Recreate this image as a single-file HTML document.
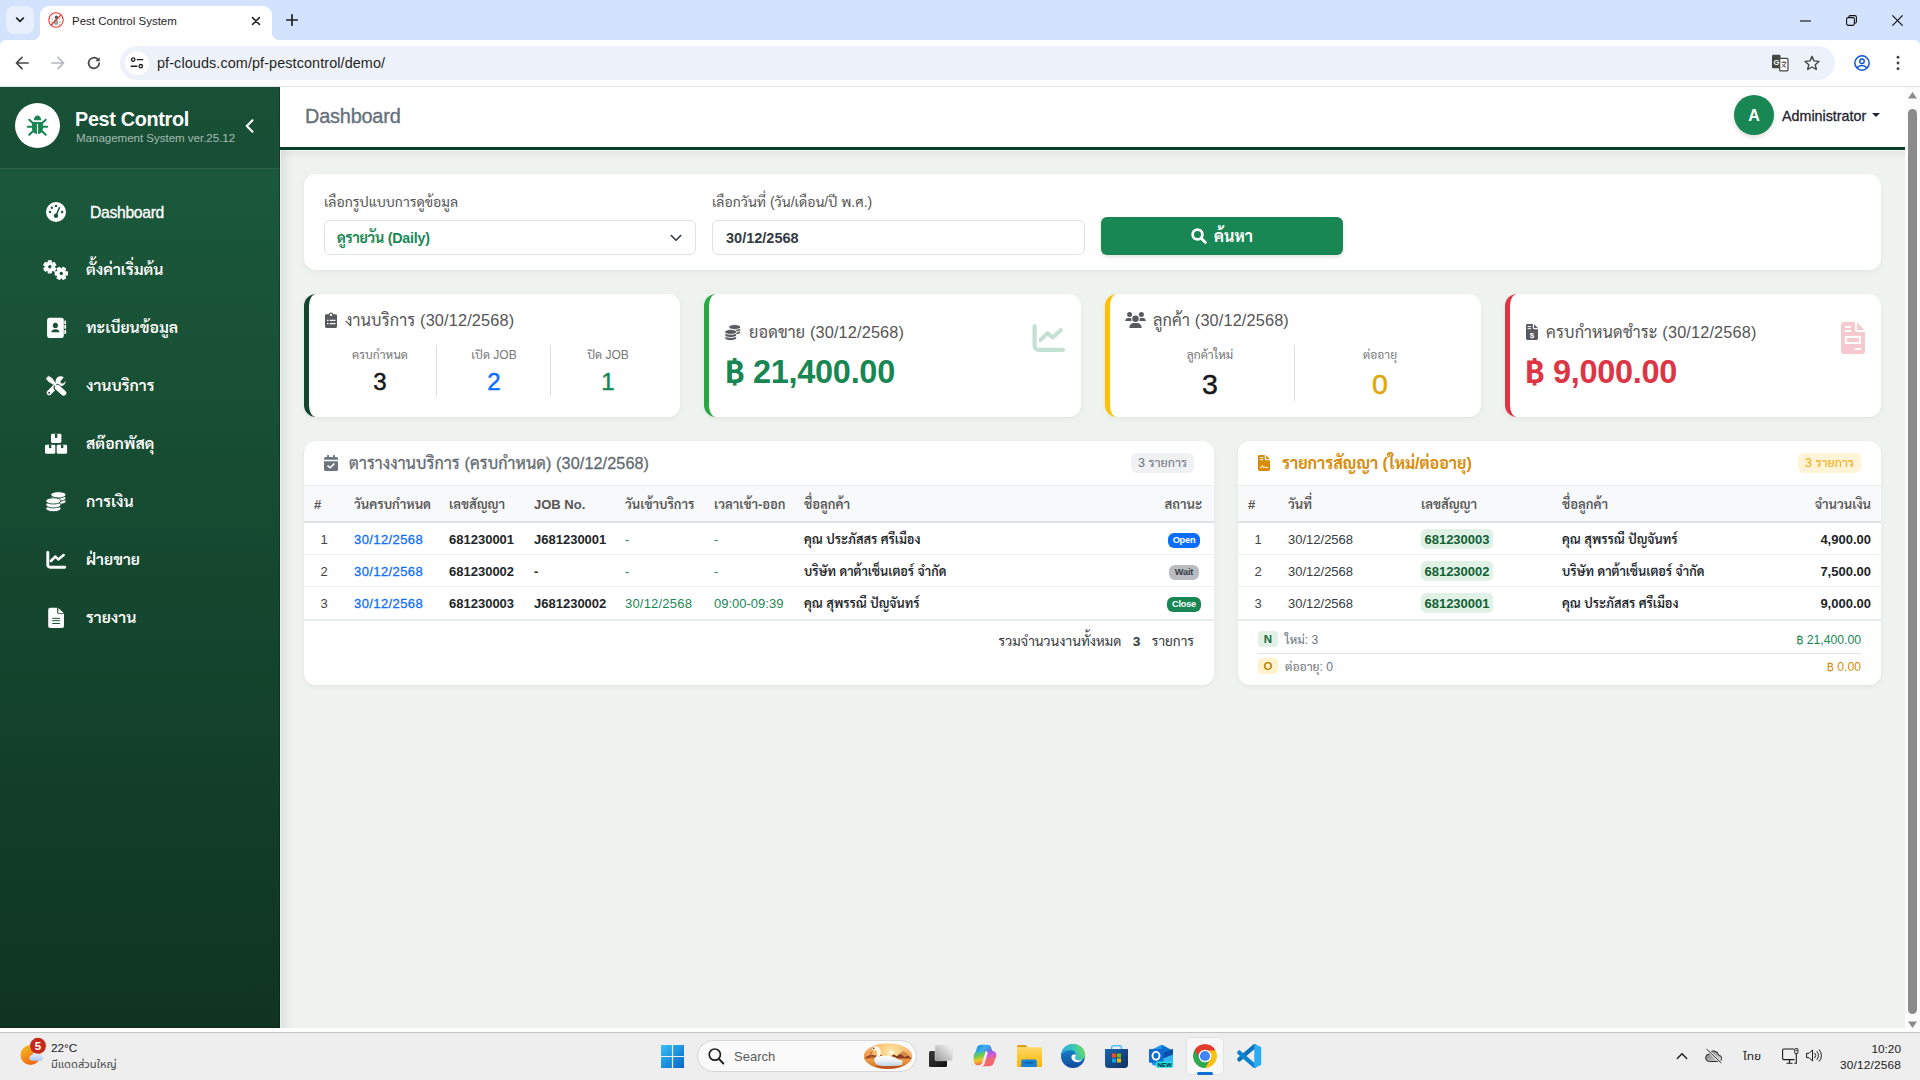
<!DOCTYPE html>
<html lang="th">
<head>
<meta charset="utf-8">
<title>Pest Control System</title>
<style>
*{box-sizing:border-box;margin:0;padding:0}
html,body{width:1920px;height:1080px;overflow:hidden;background:#fff}
body{position:relative;font-family:"Liberation Sans","Sarabun","Noto Sans Thai","Loma","Garuda","Tlwg Typo","Tahoma","Leelawadee UI",sans-serif;font-size:14px;color:#212529;-webkit-font-smoothing:antialiased}
.a{position:absolute}
.nw{white-space:nowrap}
svg{display:block;position:absolute;overflow:visible}
.ui{font-family:"Liberation Sans","Noto Sans Thai UI","Noto Sans Thai","Leelawadee UI","Sarabun","Loma","Tahoma",sans-serif}

/* ---------- browser chrome ---------- */
#tabstrip{left:0;top:0;width:1920px;height:52px;background:#d3e3fd}
#tabsearch{left:6px;top:6px;width:28px;height:28px;border-radius:8px;background:#e9f0fd}
#tab{left:40px;top:6px;width:232px;height:34px;background:#fff;border-radius:9px 9px 0 0}
#tab:before,#tab:after{content:"";position:absolute;bottom:0;width:8px;height:8px}
#tab:before{left:-8px;background:radial-gradient(circle at 0 0,transparent 8px,#fff 8.5px)}
#tab:after{right:-8px;background:radial-gradient(circle at 100% 0,transparent 8px,#fff 8.5px)}
#tabtitle{left:32px;top:7px;font-size:11.5px;line-height:16px;color:#1f1f1f;letter-spacing:0}
#toolbar{left:0;top:40px;width:1920px;height:46px;background:#fff;border-radius:6px 6px 0 0}
#tbline{left:0;top:86px;width:1920px;height:1px;background:#dfe1e5}
#omni{left:120px;top:46px;width:1715px;height:34px;border-radius:17px;background:#edf2fa}
#siteinfo{left:125px;top:51px;width:24px;height:24px;border-radius:12px;background:#fff}
#url{left:157px;top:54px;font-size:14.4px;line-height:18px;color:#1f1f1f;letter-spacing:.1px}

/* ---------- page ---------- */
#page{left:0;top:87px;width:1905px;height:941px;background:#eef3ef;overflow:hidden}
#sbar{left:1905px;top:87px;width:15px;height:941px;background:#fcfcfc}
#sidebar{left:0;top:0;width:280px;height:941px;background:linear-gradient(180deg,#1c5c3e 0%,#0f3422 100%);box-shadow:inset -1px -1px 0 rgba(0,0,0,.22)}
#sidehead{left:0;top:0;width:280px;height:82px;background:rgba(0,0,0,.115);border-bottom:1px solid rgba(255,255,255,.1)}
#sideshadow{left:280px;top:63px;width:14px;height:878px;border-left:1px solid #eff1ef;background:linear-gradient(90deg,rgba(0,0,0,.068),rgba(0,0,0,.028) 45%,rgba(0,0,0,0))}
#topshadow{left:280px;top:63px;width:1625px;height:9px;border-top:1px solid #f3f5f3;background:linear-gradient(180deg,rgba(0,0,0,.04),rgba(0,0,0,0))}
#logo{left:15px;top:16px;width:45px;height:45px;border-radius:50%;background:#fff}
#brand{left:75px;top:19px;font-size:19.8px;line-height:26px;font-weight:700;color:#fff;letter-spacing:-0.3px}
#brandsub{left:76px;top:43px;font-size:11.6px;line-height:16px;color:rgba(255,255,255,.62);letter-spacing:-0.05px}
.mi{left:86px;font-size:15.75px;line-height:28px;font-weight:600;color:#fff}
#topbar{left:280px;top:0;width:1625px;height:63px;background:#fff;border-bottom:3px solid #0a3f29}
#ptitle{left:25px;top:15px;font-size:19.9px;line-height:28px;color:#66707c;font-weight:400;letter-spacing:-0.2px;-webkit-text-stroke:.35px #66707c}
#avatar{left:1454px;top:8px;width:40px;height:40px;border-radius:50%;background:#198754;color:#fff;font-weight:700;font-size:16px;line-height:42px;text-align:center;box-shadow:0 2px 5px rgba(0,0,0,.15)}
#admin{left:1502px;top:19px;font-size:14.3px;line-height:20px;color:#1f2430;-webkit-text-stroke:.3px #1f2430}

/* ---------- content ---------- */
.card{background:#fff;border-radius:12px;box-shadow:0 2px 5px rgba(0,0,0,.05)}
.lbl{font-size:14px;line-height:20px;color:#555;}
.inp{height:35px;border:1px solid #dee2e6;border-radius:6px;background:#fff}
.inp div{position:absolute;top:7px;left:12px;font-size:14.3px;line-height:20px;font-weight:700;white-space:nowrap}
#btn{left:1101px;top:130px;width:242px;height:38px;border-radius:6px;background:#198754;box-shadow:0 2px 4px rgba(0,0,0,.12)}
#btn div{position:absolute;left:113px;top:9px;font-size:16px;line-height:22px;font-weight:700;color:#fff;white-space:nowrap}
.stat{top:207px;height:123px;width:377px;border-left:5px solid #000}
.st{font-size:16.3px;letter-spacing:.15px;line-height:22px;color:#555;white-space:nowrap}
.sl{font-size:12px;line-height:18px;color:#777;text-align:center;width:114px;white-space:nowrap}
.sn{font-size:24px;line-height:30px;font-weight:400;text-align:center;width:114px;color:#16181b;-webkit-text-stroke:.5px currentColor}
.sep{width:1px;background:#dcdfe2}
.amt{font-size:32.5px;line-height:40px;font-weight:700;white-space:nowrap;letter-spacing:-.3px}

/* ---------- tables ---------- */
.ch{font-size:16.2px;letter-spacing:.1px;line-height:22px;white-space:nowrap}
.cb{height:20px;border-radius:6px;font-size:12.5px;line-height:20px;text-align:center;white-space:nowrap}
.thead{left:0;top:44px;height:38px;background:#f8f9fa;border-top:1px solid #eceef0;border-bottom:2px solid #dee2e6}
.th{top:54px;font-size:13px;line-height:20px;font-weight:600;color:#555;white-space:nowrap}
.td{font-size:13px;line-height:20px;white-space:nowrap;color:#212529}
.rl{left:0;height:1px;background:#edeff1}
.b{font-weight:600}
.bd{height:15px;border-radius:6px;font-size:9.2px;line-height:15px;font-weight:700;text-align:center;color:#fff;letter-spacing:-.2px}
.cn{left:183px;width:72px;height:20px;border-radius:5px;background:#e1f1e6;color:#0f6137;font-weight:700;font-size:13px;line-height:21.500px;text-align:center}
.sm{font-size:12.2px;line-height:18px;white-space:nowrap}
.sb{left:20px;width:20px;height:16px;border-radius:4px;font-size:11.5px;line-height:16px;font-weight:700;text-align:center}

/* ---------- taskbar ---------- */
#tb{left:0;top:1033px;width:1920px;height:47px;background:#eeeeee}
#tbtop{left:0;top:1032px;width:1920px;height:1px;background:#c4c4c4}
.tt{font-size:12px;line-height:16px;color:#1b1b1b;white-space:nowrap}
#srch{left:697px;top:1040px;width:220px;height:32px;border-radius:16px;background:#fafafa;border:1px solid #d6d6d6}
#chromebg{left:1186px;top:1037px;width:38px;height:38px;border-radius:5px;background:#f8f8f8;border:1px solid #e3e3e3}
</style>
</head>
<body>
<!-- ================= BROWSER CHROME ================= -->
<div class="a" id="tabstrip"></div>
<div class="a" id="tabsearch"><svg style="left:8px;top:9px" width="12" height="10" viewBox="0 0 12 10"><path d="M2.700 3.100 6 6.400 9.300 3.100" fill="none" stroke="#1f1f1f" stroke-width="1.700" stroke-linecap="round" stroke-linejoin="round"/></svg></div>
<div class="a" id="tab">
  <svg style="left:8px;top:6px" width="16" height="16" viewBox="0 0 16 16"><circle cx="8" cy="8" r="7.2" fill="#fff" stroke="#e53935" stroke-width="1.1"/><ellipse cx="8.4" cy="5.2" rx="1.6" ry="1.7" fill="#555"/><ellipse cx="8" cy="10" rx="2.2" ry="3" fill="#9e9e9e"/><path d="M5 7.5l-1.5-1M5 10H3.2M5.4 12l-1.4 1.2M11 7.5l1.5-1M11 10h1.8M10.6 12l1.4 1.2" stroke="#777" stroke-width=".7"/><path d="M3 13 13 3" stroke="#e53935" stroke-width="1.1"/></svg>
  <div class="a nw ui" id="tabtitle">Pest Control System</div>
  <svg style="left:212px;top:11px" width="8" height="8" viewBox="0 0 8 8"><path d="M.6.6l6.8 6.8M7.4.6.6 7.4" stroke="#1f1f1f" stroke-width="1.5" stroke-linecap="round"/></svg>
</div>
<svg class="a" style="left:286px;top:14px" width="12" height="12" viewBox="0 0 12 12"><path d="M6 .8v10.4M.8 6h10.4" stroke="#1f1f1f" stroke-width="1.7" stroke-linecap="round"/></svg>
<!-- window controls -->
<svg class="a" style="left:1800px;top:20px" width="11" height="2" viewBox="0 0 11 2"><path d="M0 1h11" stroke="#111" stroke-width="1.1"/></svg>
<svg class="a" style="left:1846px;top:15px" width="11" height="11" viewBox="0 0 11 11"><rect x=".6" y="2.6" width="7.8" height="7.8" rx="1.6" fill="none" stroke="#111" stroke-width="1.1"/><path d="M2.8 2.4V2A1.5 1.5 0 0 1 4.3.6h4.6A1.5 1.5 0 0 1 10.4 2v4.7a1.5 1.5 0 0 1-1.5 1.5h-.3" fill="none" stroke="#111" stroke-width="1.1"/></svg>
<svg class="a" style="left:1892px;top:15px" width="11" height="11" viewBox="0 0 11 11"><path d="M.4.4l10.2 10.2M10.6.4.4 10.6" stroke="#111" stroke-width="1.2"/></svg>

<div class="a" id="toolbar"></div>
<div class="a" id="tbline"></div>
<!-- nav buttons -->
<svg class="a" style="left:15px;top:56px" width="14" height="14" viewBox="0 0 14 14"><path d="M13 7H1.6M7 1.4 1.4 7 7 12.6" fill="none" stroke="#444746" stroke-width="1.7" stroke-linecap="round" stroke-linejoin="round"/></svg>
<svg class="a" style="left:51px;top:56px" width="14" height="14" viewBox="0 0 14 14"><path d="M1 7h11.4M7 1.4 12.6 7 7 12.6" fill="none" stroke="#b4b7bb" stroke-width="1.7" stroke-linecap="round" stroke-linejoin="round"/></svg>
<svg class="a" style="left:87px;top:56px" width="14" height="14" viewBox="0 0 14 14"><path d="M12.2 7A5.3 5.3 0 1 1 10.6 3.2" fill="none" stroke="#444746" stroke-width="1.7" stroke-linecap="round"/><path d="M12.6 1v4.2H8.4z" fill="#444746"/></svg>
<div class="a" id="omni"></div>
<div class="a" id="siteinfo"><svg style="left:5px;top:6px" width="14" height="12" viewBox="0 0 14 12"><circle cx="3.2" cy="2.6" r="1.7" fill="none" stroke="#1f1f1f" stroke-width="1.3"/><path d="M7.2 2.6h5.6" stroke="#1f1f1f" stroke-width="1.4" stroke-linecap="round"/><circle cx="10.8" cy="9.2" r="1.7" fill="none" stroke="#1f1f1f" stroke-width="1.3"/><path d="M1.2 9.2h5.6" stroke="#1f1f1f" stroke-width="1.4" stroke-linecap="round"/></svg></div>
<div class="a nw ui" id="url">pf-clouds.com/pf-pestcontrol/demo/</div>
<!-- translate -->
<svg class="a" style="left:1771px;top:55px" width="18" height="17" viewBox="0 0 18 17"><path d="M2.200-.2H8.400a1.200 1.200 0 0 1 1.200 1.200V13.200H2.200A1.200 1.200 0 0 1 1 12V1A1.200 1.200 0 0 1 2.200-.2z" fill="#444746"/><rect x="8.700" y="3.300" width="8.300" height="12.600" rx="1" fill="#fdfdfe" stroke="#444746" stroke-width="1.200"/><text x="2.400" y="9.600" font-family="Liberation Sans,sans-serif" font-size="7.500" font-weight="700" fill="#fff">G</text><path d="M10.400 7.300h5M12.900 6.200v1.100M14.600 7.300c-.4 2.200-1.700 4-3.800 5M11.500 9c.7 1.500 1.900 2.700 3.700 3.400" fill="none" stroke="#444746" stroke-width=".9"/></svg>
<!-- star -->
<svg class="a" style="left:1804px;top:55px" width="16" height="16" viewBox="0 0 16 16"><path d="M8 1.4l2 4.5 4.9.5-3.7 3.3 1.1 4.8L8 12l-4.3 2.5 1.1-4.8L1.1 6.4 6 5.9z" fill="none" stroke="#444746" stroke-width="1.4" stroke-linejoin="round"/></svg>
<!-- profile -->
<svg class="a" style="left:1854px;top:55px" width="16" height="16" viewBox="0 0 16 16"><circle cx="8" cy="8" r="7.150" fill="none" stroke="#0b57d0" stroke-width="1.500"/><circle cx="8" cy="6.200" r="2.250" fill="none" stroke="#0b57d0" stroke-width="1.400"/><path d="M3.100 13c1.100-1.700 2.800-2.500 4.900-2.500s3.800.8 4.900 2.500" fill="none" stroke="#0b57d0" stroke-width="1.400"/></svg>
<!-- menu dots -->
<svg class="a" style="left:1896px;top:55px" width="4" height="16" viewBox="0 0 4 16"><circle cx="2" cy="2.300" r="1.450" fill="#444746"/><circle cx="2" cy="8" r="1.450" fill="#444746"/><circle cx="2" cy="13.700" r="1.450" fill="#444746"/></svg>

<!-- ================= PAGE ================= -->
<div class="a" id="page">
  <!-- filter card -->
  <div class="a card" style="left:304px;top:87px;width:1577px;height:96px">
    <div class="a nw lbl" style="left:20px;top:18px">เลือกรูปแบบการดูข้อมูล</div>
    <div class="a inp" style="left:20px;top:46px;width:372px"><div style="color:#198754;letter-spacing:-.25px">ดูรายวัน (Daily)</div>
      <svg style="left:345px;top:13px" width="12" height="8" viewBox="0 0 12 8"><path d="M1.300 1.500 6 6.200l4.700-4.700" fill="none" stroke="#343a40" stroke-width="1.600" stroke-linecap="round" stroke-linejoin="round"/></svg></div>
    <div class="a nw lbl" style="left:408px;top:18px">เลือกวันที่ (วัน/เดือน/ปี พ.ศ.)</div>
    <div class="a inp" style="left:408px;top:46px;width:373px"><div style="color:#343a40;left:13px;font-size:14.500px">30/12/2568</div></div>
  </div>
  <div class="a" id="btn"><svg style="left:90px;top:11px" width="16" height="16" viewBox="0 0 16 16"><circle cx="6.500" cy="6.500" r="4.900" fill="none" stroke="#fff" stroke-width="2.700"/><path d="M10.400 10.400 14.500 14.500" stroke="#fff" stroke-width="2.800" stroke-linecap="round"/></svg><div>ค้นหา</div></div>

  <!-- stat 1 -->
  <div class="a card stat" style="left:304px;width:376px;border-left-color:#14452f">
    <svg style="left:16px;top:18px" width="12" height="16" viewBox="0 0 12 16"><path d="M1.400 2.200h2.200a2.500 2.500 0 0 1 4.800 0h2.200A1.400 1.400 0 0 1 12 3.600v11a1.400 1.400 0 0 1-1.400 1.400H1.400A1.400 1.400 0 0 1 0 14.600v-11A1.400 1.400 0 0 1 1.400 2.200z" fill="#575b5f"/><circle cx="6" cy="2.900" r="1.150" fill="#fff"/><path d="M2 8.400h1.500M4.800 8.400h5.600M2 11.600h1.500M4.800 11.600h5.600" stroke="#fff" stroke-width="1.200"/></svg>
    <div class="a st" style="left:36px;top:15px">งานบริการ (30/12/2568)</div>
    <div class="a sl" style="left:14px;top:52px">ครบกำหนด</div><div class="a sn" style="left:14px;top:73px">3</div>
    <div class="a sep" style="left:127px;top:51px;height:51px"></div>
    <div class="a sl" style="left:128px;top:52px">เปิด JOB</div><div class="a sn" style="left:128px;top:73px;color:#0d6efd">2</div>
    <div class="a sep" style="left:241px;top:51px;height:51px"></div>
    <div class="a sl" style="left:242px;top:52px">ปิด JOB</div><div class="a sn" style="left:242px;top:73px;color:#198754">1</div>
  </div>
  <!-- stat 2 -->
  <div class="a card stat" style="left:704px;border-left-color:#28a745">
    <svg style="left:15.400px;top:29.700px" width="17.600" height="17.600" viewBox="0 0 22 22"><g fill="#575b5f" stroke="#fff" stroke-width="1.100"><ellipse cx="13.400" cy="10.400" rx="7.600" ry="3.100"/><ellipse cx="13.400" cy="7.100" rx="7.600" ry="3.100"/><ellipse cx="13.400" cy="3.800" rx="7.600" ry="3.100"/><ellipse cx="8.400" cy="17.600" rx="7.600" ry="3.100"/><ellipse cx="8.400" cy="13.800" rx="7.600" ry="3.100"/><ellipse cx="8.400" cy="9.900" rx="7.600" ry="3.100"/></g></svg>
    <div class="a st" style="left:40px;top:27px">ยอดขาย (30/12/2568)</div>
    <div class="a amt" style="left:16px;top:57.500px;color:#198754">฿ 21,400.00</div>
    <svg style="left:323px;top:30px" width="33" height="28" viewBox="0 0 33 28"><path d="M2.600 2.200v19.700a4 4 0 0 0 4 4H31" fill="none" stroke="#c3e0d3" stroke-width="4.200" stroke-linecap="round"/><path d="M8.500 16 15.500 9.100 20.700 13.500 29 6" fill="none" stroke="#c3e0d3" stroke-width="4" stroke-linecap="round" stroke-linejoin="round"/></svg>
  </div>
  <!-- stat 3 -->
  <div class="a card stat" style="left:1105px;width:376px;border-left-color:#ffc107">
    <svg style="left:15px;top:18px" width="21" height="16" viewBox="0 0 21 16"><g fill="#575b5f"><circle cx="10.500" cy="6.800" r="3.250"/><path d="M4.200 16c.3-3 2.300-4.900 4.300-4.900h4c2 0 4 1.900 4.300 4.900z"/><circle cx="4.600" cy="2.500" r="2.500"/><circle cx="16.400" cy="2.500" r="2.500"/><path d="M.1 9c.2-1.700 1.400-2.900 2.900-2.900h2.300c.4 0 .8.100 1.100.3-.3 1-.1 1.900.3 2.600zM20.900 9c-.2-1.700-1.400-2.900-2.900-2.900h-2.300c-.4 0-.8.100-1.100.3.300 1 .1 1.900-.3 2.600z"/></g></svg>
    <div class="a st" style="left:43px;top:15px">ลูกค้า (30/12/2568)</div>
    <div class="a sl" style="left:15px;top:52px;width:170px">ลูกค้าใหม่</div><div class="a sn" style="left:15px;top:73px;width:170px;font-size:28.500px;line-height:34px">3</div>
    <div class="a sep" style="left:184px;top:51px;height:56px"></div>
    <div class="a sl" style="left:185px;top:52px;width:170px">ต่ออายุ</div><div class="a sn" style="left:185px;top:73px;width:170px;font-size:28.500px;line-height:34px;color:#e0a800">0</div>
  </div>
  <!-- stat 4 -->
  <div class="a card stat" style="left:1505px;width:376px;border-left-color:#dc3545">
    <svg style="left:16px;top:30px" width="12" height="16" viewBox="0 0 12 16"><path d="M1.400 0H6.800v3.800A1.400 1.400 0 0 0 8.200 5.200H12v9.400a1.400 1.400 0 0 1-1.400 1.400H1.400A1.400 1.400 0 0 1 0 14.600V1.400A1.400 1.400 0 0 1 1.400 0z" fill="#565a5e"/><path d="M8 .2 11.800 4H8z" fill="#565a5e"/><path d="M1.600 2.600h3.600M1.600 4.700h3.600" stroke="#fff" stroke-width="1"/><text x="3.700" y="13.500" font-family="Liberation Sans,sans-serif" font-size="8" font-weight="700" fill="#fff">$</text></svg>
    <div class="a st" style="left:36px;top:27px">ครบกำหนดชำระ (30/12/2568)</div>
    <div class="a amt" style="left:15px;top:57.500px;color:#dc3545">฿ 9,000.00</div>
    <svg style="left:331px;top:28px" width="24" height="32" viewBox="0 0 24 32"><path d="M3 0H14V8a2 2 0 0 0 2 2h8V29a3 3 0 0 1-3 3H3a3 3 0 0 1-3-3V3A3 3 0 0 1 3 0z" fill="#f5c9ce"/><path d="M16 .6 23.400 8H16z" fill="#f5c9ce"/><path d="M3.800 5H10M3.800 9H10M13.900 27.100h6" stroke="#fff" stroke-width="2"/><rect x="4.800" y="14.900" width="14.100" height="6.100" fill="none" stroke="#fff" stroke-width="2"/></svg>
  </div>
  <!-- service table -->
  <div class="a card" style="left:304px;top:354px;width:910px;height:244px">
    <svg style="left:20px;top:14px" width="14" height="16" viewBox="0 0 14 16"><path d="M0 6.200h14v8.300a1.500 1.500 0 0 1-1.500 1.500h-11A1.500 1.500 0 0 1 0 14.500z" fill="#6c757d"/><path d="M1.500 2h11A1.500 1.500 0 0 1 14 3.500v1.200H0V3.500A1.500 1.500 0 0 1 1.500 2z" fill="#6c757d"/><rect x="3.100" y="0" width="1.900" height="3.500" rx=".5" fill="#6c757d"/><rect x="9" y="0" width="1.900" height="3.500" rx=".5" fill="#6c757d"/><path d="M3.500 10.600 6.200 12.700 10.400 8.500" fill="none" stroke="#fff" stroke-width="1.600"/></svg>
    <div class="a ch" style="left:45px;top:11px;color:#646b72;-webkit-text-stroke:.3px #646b72">ตารางงานบริการ (ครบกำหนด) (30/12/2568)</div>
    <div class="a cb" style="left:827px;top:12px;width:63px;background:#eff1f3;color:#6c757d">3 รายการ</div>
    <div class="a thead" style="width:910px"></div>
    <div class="a th" style="left:10px">#</div>
    <div class="a th" style="left:50px">วันครบกำหนด</div>
    <div class="a th" style="left:145px">เลขสัญญา</div>
    <div class="a th" style="left:230px">JOB No.</div>
    <div class="a th" style="left:321px">วันเข้าบริการ</div>
    <div class="a th" style="left:410px">เวลาเข้า-ออก</div>
    <div class="a th" style="left:500px">ชื่อลูกค้า</div>
    <div class="a th" style="right:12px">สถานะ</div>
    <div class="a td" style="left:0;width:40px;text-align:center;top:89px;color:#444">1</div>
    <div class="a td" style="left:50px;top:89px;color:#0d6efd;letter-spacing:.4px;-webkit-text-stroke:.3px #0d6efd">30/12/2568</div>
    <div class="a td b" style="left:145px;top:89px">681230001</div>
    <div class="a td b" style="left:230px;top:89px">J681230001</div>
    <div class="a td" style="left:321px;top:89px;color:#198754">-</div>
    <div class="a td" style="left:410px;top:89px;color:#198754">-</div>
    <div class="a td b" style="left:500px;top:89px;font-size:12.700px">คุณ ประภัสสร ศรีเมือง</div>
    <div class="a bd" style="left:864px;top:92px;width:32px;background:#0d6efd;color:#fff">Open</div>
    <div class="a rl" style="top:113px;width:910px"></div>
    <div class="a td" style="left:0;width:40px;text-align:center;top:121px;color:#444">2</div>
    <div class="a td" style="left:50px;top:121px;color:#0d6efd;letter-spacing:.4px;-webkit-text-stroke:.3px #0d6efd">30/12/2568</div>
    <div class="a td b" style="left:145px;top:121px">681230002</div>
    <div class="a td b" style="left:230px;top:121px">-</div>
    <div class="a td" style="left:321px;top:121px;color:#198754">-</div>
    <div class="a td" style="left:410px;top:121px;color:#198754">-</div>
    <div class="a td b" style="left:500px;top:121px;font-size:12.700px">บริษัท ดาต้าเซ็นเตอร์ จำกัด</div>
    <div class="a bd" style="left:865px;top:124px;width:30px;background:#b9bdc1;color:#343a40">Wait</div>
    <div class="a rl" style="top:145px;width:910px"></div>
    <div class="a td" style="left:0;width:40px;text-align:center;top:153px;color:#444">3</div>
    <div class="a td" style="left:50px;top:153px;color:#0d6efd;letter-spacing:.4px;-webkit-text-stroke:.3px #0d6efd">30/12/2568</div>
    <div class="a td b" style="left:145px;top:153px">681230003</div>
    <div class="a td b" style="left:230px;top:153px">J681230002</div>
    <div class="a td" style="left:321px;top:153px;color:#198754;letter-spacing:.2px">30/12/2568</div>
    <div class="a td" style="left:410px;top:153px;color:#198754">09:00-09:39</div>
    <div class="a td b" style="left:500px;top:153px;font-size:12.700px">คุณ สุพรรณี ปัญจันทร์</div>
    <div class="a bd" style="left:863px;top:156px;width:34px;background:#198754;color:#fff">Close</div>
    <div class="a rl" style="top:178px;width:910px;height:2px;background:#e9ecef"></div>
    <div class="a td" style="right:20px;top:191px;font-size:13.7px;color:#343a40">รวมจำนวนงานทั้งหมด &nbsp; <b>3</b> &nbsp; รายการ</div>
  </div>
  <!-- contract table -->
  <div class="a card" style="left:1238px;top:354px;width:643px;height:244px">
    <svg style="left:20px;top:14px" width="12" height="16" viewBox="0 0 12 16"><path d="M1.400 0H6.800v3.800A1.400 1.400 0 0 0 8.200 5.200H12v9.400a1.400 1.400 0 0 1-1.400 1.400H1.400A1.400 1.400 0 0 1 0 14.600V1.400A1.400 1.400 0 0 1 1.400 0z" fill="#d88c08"/><path d="M8 .2 11.800 4H8z" fill="#d88c08"/><path d="M1.900 2.600h3.300M1.900 4.700h3.300" stroke="#fff" stroke-width="1"/><path d="M2 12.500h1.500l1-2.300 1.200 2.600.9-1.200.8.900h2.700" fill="none" stroke="#fff" stroke-width=".9" stroke-linejoin="round"/></svg>
    <div class="a ch" style="left:44px;top:12px;color:#d88c08;font-weight:700;font-size:16px;letter-spacing:0">รายการสัญญา (ใหม่/ต่ออายุ)</div>
    <div class="a cb" style="left:560px;top:12px;width:63px;background:#fff5d6;color:#f3a60b">3 รายการ</div>
    <div class="a thead" style="width:643px"></div>
    <div class="a th" style="left:10px">#</div>
    <div class="a th" style="left:50px">วันที่</div>
    <div class="a th" style="left:183px">เลขสัญญา</div>
    <div class="a th" style="left:324px">ชื่อลูกค้า</div>
    <div class="a th" style="right:10px">จำนวนเงิน</div>
    <div class="a td" style="left:0;width:40px;text-align:center;top:89px;color:#444">1</div>
    <div class="a td" style="left:50px;top:89px;color:#343a40">30/12/2568</div>
    <div class="a cn" style="top:88px">681230003</div>
    <div class="a td b" style="left:324px;top:89px;font-size:12.700px">คุณ สุพรรณี ปัญจันทร์</div>
    <div class="a td b" style="right:10px;top:89px">4,900.00</div>
    <div class="a rl" style="top:113px;width:643px"></div>
    <div class="a td" style="left:0;width:40px;text-align:center;top:121px;color:#444">2</div>
    <div class="a td" style="left:50px;top:121px;color:#343a40">30/12/2568</div>
    <div class="a cn" style="top:120px">681230002</div>
    <div class="a td b" style="left:324px;top:121px;font-size:12.700px">บริษัท ดาต้าเซ็นเตอร์ จำกัด</div>
    <div class="a td b" style="right:10px;top:121px">7,500.00</div>
    <div class="a rl" style="top:145px;width:643px"></div>
    <div class="a td" style="left:0;width:40px;text-align:center;top:153px;color:#444">3</div>
    <div class="a td" style="left:50px;top:153px;color:#343a40">30/12/2568</div>
    <div class="a cn" style="top:152px">681230001</div>
    <div class="a td b" style="left:324px;top:153px;font-size:12.700px">คุณ ประภัสสร ศรีเมือง</div>
    <div class="a td b" style="right:10px;top:153px">9,000.00</div>
    <div class="a rl" style="top:178px;width:643px;height:2px;background:#e9ecef"></div>
    <div class="a sb" style="top:190px;background:#e1f1e6;color:#146c43">N</div>
    <div class="a sm" style="left:47px;top:190px;color:#6c757d">ใหม่: 3</div>
    <div class="a sm" style="right:20px;top:190px;color:#198754">฿ 21,400.00</div>
    <div class="a rl" style="left:20px;top:212px;width:603px;background:#dee2e6"></div>
    <div class="a sb" style="top:217px;background:#fff3cd;color:#b8860b">O</div>
    <div class="a sm" style="left:47px;top:217px;color:#6c757d">ต่ออายุ: 0</div>
    <div class="a sm" style="right:20px;top:217px;color:#d88c08">฿ 0.00</div>
  </div>
  <div class="a" id="topbar">
    <div class="a nw" id="ptitle">Dashboard</div>
    <div class="a" id="avatar">A</div>
    <div class="a nw" id="admin">Administrator</div>
    <svg style="left:1592px;top:26px" width="8" height="4" viewBox="0 0 8 4"><path d="M0 0h8L4 4z" fill="#1f2430"/></svg>
  </div>
  <div class="a" id="topshadow"></div>
  <div class="a" id="sideshadow"></div>
  <div class="a" id="sidebar">
    <div class="a" id="sidehead">
      <div class="a" id="logo"><svg style="left:12px;top:12px" width="21" height="21" viewBox="0 0 21 21"><path d="M6.750 5.300a3.750 4.700 0 0 1 7.500 0z" fill="#198754"/><path d="M5 7H16v6.500a5.500 5.500 0 0 1-11 0z" fill="#198754"/><path d="M2.250 4.750 5.500 7.800M.8 11.750H5M2.250 19.750 6 16.200M18.750 4.750 15.500 7.800M20.200 11.750H16M18.750 19.750 15 16.200" stroke="#198754" stroke-width="2.100" stroke-linecap="round"/><rect x="9.950" y="8.900" width="1.100" height="10.500" fill="#fff"/></svg></div>
      <div class="a nw" id="brand">Pest Control</div>
      <div class="a nw" id="brandsub">Management System ver.25.12</div>
      <svg style="left:245px;top:32px" width="9" height="14" viewBox="0 0 9 14"><path d="M7.500 1.300 1.800 7l5.700 5.700" fill="none" stroke="#fff" stroke-width="2.200" stroke-linecap="round" stroke-linejoin="round"/></svg>
    </div>
    <!-- SIDEBAR-MENU -->
    <!-- dashboard -->
    <svg style="left:46px;top:115px" width="20" height="20" viewBox="0 0 20 20"><circle cx="10" cy="10" r="10" fill="#fff"/><circle cx="10" cy="3.900" r="1.200" fill="#1b563a"/><circle cx="5.800" cy="5.800" r="1.200" fill="#1b563a"/><circle cx="4" cy="10" r="1.200" fill="#1b563a"/><circle cx="16.100" cy="10" r="1.200" fill="#1b563a"/><path d="M10 13.600 13.400 5.700" stroke="#1b563a" stroke-width="1.500" stroke-linecap="round"/><circle cx="10" cy="13.700" r="2.250" fill="#1b563a"/></svg>
    <div class="a nw mi" style="left:90px;top:112px;font-weight:400;font-size:15.700px;letter-spacing:-.3px;-webkit-text-stroke:.3px #fff">Dashboard</div>
    <!-- cogs -->
    <svg style="left:43px;top:173px" width="26" height="21" viewBox="0 0 26 21"><path d="M8.50 10.97 L8.30 12.92 L5.30 12.92 L5.10 10.97 L4.04 10.36 L2.25 11.16 L0.75 8.56 L2.34 7.41 L2.34 6.19 L0.75 5.04 L2.25 2.44 L4.04 3.24 L5.10 2.63 L5.30 0.68 L8.30 0.68 L8.50 2.63 L9.56 3.24 L11.35 2.44 L12.85 5.04 L11.26 6.19 L11.26 7.41 L12.85 8.56 L11.35 11.16 L9.56 10.36Z" fill="#fff" stroke="#fff" stroke-width="1.100" stroke-linejoin="round"/><circle cx="6.800" cy="6.800" r="1.700" fill="#1b563a"/><path d="M22.47 11.70 L24.42 11.90 L24.42 14.90 L22.47 15.10 L21.86 16.16 L22.66 17.95 L20.06 19.45 L18.91 17.86 L17.69 17.86 L16.54 19.45 L13.94 17.95 L14.74 16.16 L14.13 15.10 L12.18 14.90 L12.18 11.90 L14.13 11.70 L14.74 10.64 L13.94 8.85 L16.54 7.35 L17.69 8.94 L18.91 8.94 L20.06 7.35 L22.66 8.85 L21.86 10.64Z" fill="#fff" stroke="#fff" stroke-width="1.100" stroke-linejoin="round"/><circle cx="18.300" cy="13.400" r="1.700" fill="#1a5338"/></svg>
    <div class="a nw mi" style="top:169px">ตั้งค่าเริ่มต้น</div>
    <!-- address book -->
    <svg style="left:47px;top:230px" width="20" height="22" viewBox="0 0 20 22"><rect x=".1" y=".8" width="16.700" height="20.200" rx="2.300" fill="#fff"/><circle cx="8.400" cy="8.400" r="2.550" fill="#1a5137"/><path d="M4.200 15.300c.3-2 1.900-3 4.200-3s3.900 1 4.200 3z" fill="#1a5137"/><rect x="17.300" y="3.400" width="1.800" height="3.800" rx=".5" fill="#fff"/><rect x="17.300" y="7.900" width="1.800" height="3.800" rx=".5" fill="#fff"/><rect x="17.300" y="13" width="1.800" height="4" rx=".5" fill="#fff"/></svg>
    <div class="a nw mi" style="top:227px">ทะเบียนข้อมูล</div>
    <!-- tools -->
    <svg style="left:46px;top:289px" width="21" height="20" viewBox="0 0 21 20"><path d="M12.800 7 3.100 16.700" stroke="#fff" stroke-width="5" stroke-linecap="round"/><circle cx="14.600" cy="5.200" r="5" fill="#fff"/><path d="M14.300 5.500 17.700 1.200 20.500 4 17.800 7.300 15.200 7.600z" fill="#1a4f36"/><path d="M16.500 0h4v3z" fill="#1a4f36"/><circle cx="3.100" cy="16.800" r="1" fill="#1a4f36"/><path d="M.2 2.400 2.500.2 6 2.300 8.900 6.600 7.200 8.300 2.600 5.600z" fill="#fff" stroke="#fff" stroke-width=".6" stroke-linejoin="round"/><path d="M11.200 11.500 17.500 17" stroke="#1a4f36" stroke-width="7" stroke-linecap="round"/><path d="M7.600 7.200 11.500 11" stroke="#fff" stroke-width="1.800"/><path d="M11.600 11.600 17.600 17" stroke="#fff" stroke-width="5.400" stroke-linecap="round"/></svg>
    <div class="a nw mi" style="top:285px">งานบริการ</div>
    <!-- boxes -->
    <svg style="left:45px;top:347px" width="23" height="20" viewBox="0 0 23 20"><rect x="6" y="-.2" width="10.400" height="9.200" rx="1.400" fill="#fff"/><rect x="9.900" y="-.2" width="2.400" height="4.100" fill="#1a4d35"/><rect x="0" y="10.700" width="10.300" height="9.100" rx="1.400" fill="#fff"/><rect x="4" y="10.700" width="2.300" height="3.400" fill="#1a4d35"/><rect x="11.700" y="10.700" width="10.400" height="9.100" rx="1.400" fill="#fff"/><rect x="16" y="10.700" width="2.300" height="3.400" fill="#1a4d35"/></svg>
    <div class="a nw mi" style="top:343px">สต๊อกพัสดุ</div>
    <!-- coins -->
    <svg style="left:45px;top:404px" width="22" height="22" viewBox="0 0 22 22"><g fill="#fff" stroke="#194b34" stroke-width=".9"><ellipse cx="13.400" cy="10.400" rx="7.600" ry="3.100"/><ellipse cx="13.400" cy="7.100" rx="7.600" ry="3.100"/><ellipse cx="13.400" cy="3.800" rx="7.600" ry="3.100"/><ellipse cx="8.400" cy="17.600" rx="7.600" ry="3.100"/><ellipse cx="8.400" cy="13.800" rx="7.600" ry="3.100"/><ellipse cx="8.400" cy="9.900" rx="7.600" ry="3.100"/></g></svg>
    <div class="a nw mi" style="top:401px">การเงิน</div>
    <!-- chart-line -->
    <svg style="left:45px;top:463px" width="22" height="19" viewBox="0 0 22 19"><path d="M2.800 2.400v12.600a2.200 2.200 0 0 0 2.200 2.200h14.800" fill="none" stroke="#fff" stroke-width="2.900" stroke-linecap="round"/><path d="M5.900 11 10.400 6.500 13.200 9.500 18.700 5.100" fill="none" stroke="#fff" stroke-width="2.500" stroke-linecap="round" stroke-linejoin="round"/></svg>
    <div class="a nw mi" style="top:459px">ฝ่ายขาย</div>
    <!-- file-alt -->
    <svg style="left:48px;top:521px" width="16" height="21" viewBox="0 0 16 21"><path d="M2.200-.2h7v4.700a1.300 1.300 0 0 0 1.300 1.300H16v12.200a2 2 0 0 1-2 2H2.200a2 2 0 0 1-2-2V1.800a2 2 0 0 1 2-2z" fill="#fff"/><path d="M10.300.1 15.700 4.900h-5.400z" fill="#fff"/><path d="M4.300 10.400h7.600M4.300 12.700h7.600M4.300 15.500h7.600" stroke="#1d5038" stroke-width="1"/></svg>
    <div class="a nw mi" style="top:517px">รายงาน</div>
  </div>
</div>
<div class="a" id="sbar">
  <svg style="left:3px;top:5px" width="9" height="7" viewBox="0 0 9 7"><path d="M4.500 0 9 6.500H0z" fill="#8b8b8b"/></svg>
  <div class="a" style="left:3px;top:21.500px;width:9px;height:905.500px;border-radius:4.500px;background:#8b8b8b"></div>
  <svg style="left:3px;top:934px" width="9" height="7" viewBox="0 0 9 7"><path d="M4.500 7 9 .5H0z" fill="#8b8b8b"/></svg>
</div>
<!-- ================= TASKBAR ================= -->
<div class="a" id="tbtop"></div>
<div class="a" id="tb"></div>
<!-- weather -->
<svg class="a" style="left:20px;top:1037px" width="26" height="30" viewBox="0 0 26 30"><defs><linearGradient id="sun" x1="0" y1="0" x2=".6" y2="1"><stop offset="0" stop-color="#f7c325"/><stop offset="1" stop-color="#f0640f"/></linearGradient><linearGradient id="cld" x1="0" y1="0" x2="0" y2="1"><stop offset="0" stop-color="#eef4fd"/><stop offset="1" stop-color="#a9c8f3"/></linearGradient></defs><circle cx="10.500" cy="18" r="10" fill="url(#sun)"/><path d="M11.500 23.800a2.900 2.900 0 0 1 .5-5.700 4.300 4.300 0 0 1 7.900-.6 3.200 3.200 0 0 1 .4 6.300z" fill="url(#cld)"/><circle cx="18" cy="8.800" r="8" fill="#c42b1c"/><text x="18" y="13" text-anchor="middle" font-family="Liberation Sans,sans-serif" font-size="11.500" font-weight="700" fill="#fff">5</text></svg>
<div class="a tt ui" style="left:51px;top:1040px;font-size:11.800px">22°C</div>
<div class="a tt ui" style="left:51px;top:1056px;color:#4a4a4a;font-size:11.200px">มีแดดส่วนใหญ่</div>
<!-- start -->
<svg class="a" style="left:661px;top:1045px" width="23" height="23" viewBox="0 0 23 23"><defs><linearGradient id="win" x1="0" y1="0" x2="1" y2="1"><stop offset="0" stop-color="#35c1f7"/><stop offset="1" stop-color="#0567c9"/></linearGradient></defs><path d="M0 0h10.900v10.900H0zM12.100 0H23v10.900H12.100zM0 12.100h10.900V23H0zM12.100 12.100H23V23H12.100z" fill="url(#win)"/></svg>
<!-- search -->
<div class="a" id="srch"></div>
<svg class="a" style="left:708px;top:1047px" width="17" height="18" viewBox="0 0 17 18"><circle cx="6.800" cy="7.600" r="5.600" fill="none" stroke="#1f1f1f" stroke-width="1.700"/><path d="M10.900 11.900 15.300 16.500" stroke="#1f1f1f" stroke-width="1.900" stroke-linecap="round"/></svg>
<div class="a tt ui" style="left:734px;top:1048px;font-size:13px;line-height:18px;color:#5a5a5a">Search</div>
<svg class="a" style="left:864px;top:1043px" width="48" height="26" viewBox="0 0 48 26"><defs><radialGradient id="sky" cx="27.300" cy="9.700" r="26" gradientUnits="userSpaceOnUse"><stop offset="0" stop-color="#ffeab0"/><stop offset=".35" stop-color="#fbd086"/><stop offset="1" stop-color="#f29a52"/></radialGradient><linearGradient id="wat" x1="0" y1="0" x2="0" y2="1"><stop offset="0" stop-color="#eea149"/><stop offset=".55" stop-color="#e28433"/><stop offset="1" stop-color="#c0521f"/></linearGradient><linearGradient id="swb" x1="0" y1="0" x2="0" y2="1"><stop offset="0" stop-color="#fffefb"/><stop offset=".45" stop-color="#eef3f5"/><stop offset="1" stop-color="#bcd6e8"/></linearGradient><clipPath id="ell"><ellipse cx="24" cy="13.200" rx="24.100" ry="12.800"/></clipPath></defs><g clip-path="url(#ell)"><rect width="48" height="26" fill="url(#sky)"/><path d="M30 15.800 38.700 8.300c1.800-.4 5 2 9.300 7.500z" fill="#d48c4c"/><path d="M24.500 15.800 29.500 11.200 33 13.200 36 10.800 40.500 14 44 12.800 48 15.800z" fill="#8f3d1e"/><path d="M0 15.800 2.800 13.200 7 11.600 11.500 12.600 16 11.400 20 13.500 24 15.800z" fill="#9c4b24"/><path d="M3 15.800 8 13.500 13 15.800z" fill="#c9773a"/><rect x="0" y="15.700" width="48" height="10.300" fill="url(#wat)"/><circle cx="27.300" cy="9.700" r="2.400" fill="#fff7df"/><path d="M12 23.300h26M8 24.600h32" stroke="#b3461c" stroke-width=".8" opacity=".7"/><path d="M10.300 16.600c-.3-2.300 1.700-3.500 4.200-2.400 1.600-1.400 4.500-1.700 7.500-1.300 5-.3 9 1.100 12 3.400 2 .7 4 1.200 5 1.500-.5.800-1.400 1-.2 1.800-1.200.7-.8 1.400-.6 2-2.200 1.200-8.200 1.400-14.200 1.400s-11-.4-12.400-2.500c-1-1.500-1.400-2.400-1.300-3.900z" fill="url(#swb)"/><path d="M8.700 4.500c1.900-1.900 5.800-1.400 7.400 1.500 1.600 3 .5 5.700-.9 8.600l-4.300 2c1.900-4 2.900-6.400 1.900-8.400-.7-1.300-2.100-.9-3.100-.5-1.300-.6-1.800-2.200-1-3.200z" fill="#fbfaf5"/><circle cx="9.700" cy="5.300" r=".75" fill="#111"/><path d="M8.300 6.800 6 10l1.700.3 2-2.300z" fill="#eaa033"/><path d="M5.800 10.200 7 8.900l.9 1.400z" fill="#5a3a14"/></g></svg>
<!-- task view -->
<svg class="a" style="left:929px;top:1045px" width="24" height="22" viewBox="0 0 24 22"><defs><linearGradient id="tv1" x1="0" y1="0" x2="1" y2="1"><stop offset="0" stop-color="#3a3a3a"/><stop offset="1" stop-color="#111"/></linearGradient><linearGradient id="tv2" x1="0" y1="1" x2="1" y2="0"><stop offset="0" stop-color="#9a9a9a"/><stop offset="1" stop-color="#fafafa"/></linearGradient></defs><rect x="0" y="6" width="18" height="16" rx="1.500" fill="url(#tv1)"/><rect x="6" y="0" width="17.500" height="15.700" rx="1.500" fill="url(#tv2)" stroke="#e2e2e2" stroke-width=".5"/></svg>
<!-- copilot -->
<svg class="a" style="left:973px;top:1044px" width="24" height="23" viewBox="0 0 24 23"><defs><linearGradient id="cp1" x1="0" y1="0" x2="1" y2=".6"><stop offset="0" stop-color="#1e7bea"/><stop offset=".55" stop-color="#38b3e6"/><stop offset="1" stop-color="#6f5be6"/></linearGradient><linearGradient id="cp2" x1=".3" y1="0" x2=".5" y2="1"><stop offset="0" stop-color="#35b9b0"/><stop offset=".35" stop-color="#7ccb47"/><stop offset=".65" stop-color="#f3c52a"/><stop offset="1" stop-color="#f2614a"/></linearGradient><linearGradient id="cp3" x1="0" y1="0" x2=".3" y2="1"><stop offset="0" stop-color="#8e5cf0"/><stop offset=".6" stop-color="#d45bd0"/><stop offset="1" stop-color="#f2686f"/></linearGradient></defs><path d="M8.200.8h6.600c1.700 0 2.800 1 3.300 2.600l1.100 3.700h-5.100c-1.400 0-2.300.8-2.700 2.100l-.8 2.600H1.500l2.600-8.200C4.700 1.800 6.200.8 8.200.8z" fill="url(#cp1)"/><path d="M.7 12.100c0-2.400 1.400-4.300 3.700-4.300h8l-2.800 9.600c-.6 2-1.800 3.800-4.300 3.800C2.600 21.200.7 19 .7 16.400z" fill="url(#cp2)"/><path d="M15.700 22.200H9.100c1.300-.4 2.100-1.500 2.600-3l1-3.400h5.500c1.400 0 2.300-.8 2.700-2.100l.8-2.600 1.600-.1-2.700 8.600c-.6 1.700-2.100 2.600-4.900 2.600z" fill="#f2686f"/><path d="M13.700 7.100h5.900c2.300 0 3.700 1.800 3.700 4.100 0 2.800-1.700 4.700-4.100 4.700h-6.500l1.600-5.300c.5-1.600.6-2.700-.6-3.500z" fill="url(#cp3)"/></svg>
<!-- explorer -->
<svg class="a" style="left:1017px;top:1045px" width="25" height="22" viewBox="0 0 25 22"><defs><linearGradient id="fd" x1="0" y1="0" x2="0" y2="1"><stop offset="0" stop-color="#ffd966"/><stop offset="1" stop-color="#f5b400"/></linearGradient></defs><path d="M1.500 0h7.200l2.300 2.500H0V1.500A1.500 1.500 0 0 1 1.500 0z" fill="#dca00c"/><path d="M0 2.300h23.500A1.500 1.500 0 0 1 25 3.800v16.700a1.500 1.500 0 0 1-1.500 1.500h-22A1.500 1.500 0 0 1 0 20.500z" fill="url(#fd)"/><path d="M4.200 22v-5.800a1.700 1.700 0 0 1 1.700-1.700h12.200a1.700 1.700 0 0 1 1.700 1.700V22z" fill="#1a7fd6"/><rect x="7.500" y="17" width="9" height="1.600" rx=".8" fill="#0d5fa8"/></svg>
<!-- edge -->
<svg class="a" style="left:1061px;top:1044px" width="24" height="24" viewBox="0 0 24 24"><defs><linearGradient id="ed1" x1="0" y1="0" x2="0" y2="1"><stop offset="0" stop-color="#1b8fd6"/><stop offset="1" stop-color="#114a9b"/></linearGradient><linearGradient id="ed2" x1="0" y1=".5" x2="1" y2=".2"><stop offset="0" stop-color="#2aa7e0"/><stop offset=".55" stop-color="#38c6b7"/><stop offset="1" stop-color="#7ddc4c"/></linearGradient></defs><circle cx="12" cy="12" r="12" fill="url(#ed1)"/><path d="M.4 10.200C1.300 4.400 6.100 0 12 0c6.600 0 12 4.600 12 10.400 0 3.500-2.500 5.900-5.700 5.900-2.600 0-4.300-1.200-4.300-2.600 0-.8.900-1.400.9-2.900 0-2.400-2.300-4.500-5.500-4.500-4 0-7.300 1.800-9 3.900z" fill="url(#ed2)"/><path d="M15 11.200c-.2 1.300-1 1.800-1 2.500 0 1.400 1.700 2.600 4.300 2.600 1.300 0 2.500-.4 3.400-1.100-1.500 2.300-4.100 3.400-6.700 2.900-3.300-.6-5.100-3.500-4.400-6.100.6-1.900 3.500-2.600 4.400-.8z" fill="#f2f8fd"/></svg>
<!-- store -->
<svg class="a" style="left:1105px;top:1045px" width="23" height="23" viewBox="0 0 23 23"><defs><linearGradient id="ms" x1="0" y1="0" x2="1" y2="1"><stop offset="0" stop-color="#1a63b0"/><stop offset="1" stop-color="#12315f"/></linearGradient></defs><path d="M6.500 5V2.500A1.800 1.800 0 0 1 8.300.7h6.400a1.800 1.800 0 0 1 1.800 1.800V5" fill="none" stroke="#4cc2f5" stroke-width="1.500"/><path d="M0 4h23v15.500a3.500 3.500 0 0 1-3.500 3.500h-16A3.500 3.500 0 0 1 0 19.500z" fill="url(#ms)"/><rect x="7" y="8.500" width="4" height="4" fill="#f25022"/><rect x="12" y="8.500" width="4" height="4" fill="#7fba00"/><rect x="7" y="13.500" width="4" height="4" fill="#00a4ef"/><rect x="12" y="13.500" width="4" height="4" fill="#ffb900"/></svg>
<!-- outlook -->
<svg class="a" style="left:1148px;top:1044px" width="26" height="24" viewBox="0 0 26 24"><path d="M4 5.500 12.500 1.200c.8-.4 1.600-.4 2.400 0L24 6.300c.6.400 1 1 1 1.700V19.500a2 2 0 0 1-2 2H6a2 2 0 0 1-2-2z" fill="#1e9be8"/><path d="M13.700 1 24 6.300c.6.400 1 1 1 1.700v1L13.700 15z" fill="#0f6fd0"/><path d="M13.700 9.500 25 4.800V12L13.700 17z" fill="#0a4aa0" opacity=".9"/><path d="M13.700 15 25 10.500v9a2 2 0 0 1-2 2H13.700z" fill="#36b4f2"/><rect x="1" y="5" width="14.400" height="13.800" rx="1.200" fill="#0f6cd0"/><ellipse cx="8" cy="11.800" rx="3.500" ry="3.900" fill="none" stroke="#fff" stroke-width="1.900"/><rect x="8.200" y="17.400" width="17" height="6.400" rx="1" fill="#22e2e2"/><text x="16.700" y="22.900" text-anchor="middle" font-family="Liberation Sans,sans-serif" font-size="6.200" font-weight="700" fill="#06283a">NEW</text></svg>
<!-- chrome -->
<div class="a" id="chromebg"></div>
<svg class="a" style="left:1193px;top:1044px" width="24" height="24" viewBox="0 0 24 24"><circle cx="12" cy="12" r="12" fill="#fff"/><path d="M12 12 1.610 6A12 12 0 0 1 22.390 6z" fill="#e33b2e"/><path d="M12 12 22.390 6A12 12 0 0 1 12 24z" fill="#fbc116"/><path d="M12 12 12 24A12 12 0 0 1 1.610 6z" fill="#2da94f"/><path d="M12 6.500h10.100l-5.300 9.200z" fill="#fbc116"/><path d="M7.200 15 12.500 24l4.300-8.300z" fill="#2da94f"/><path d="M1.610 6 7.200 15 12 6.500z" fill="#e33b2e"/><circle cx="12" cy="12" r="6.300" fill="#fff"/><circle cx="12" cy="12" r="5.100" fill="#4285f4"/></svg>
<div class="a" style="left:1197px;top:1072px;width:16px;height:3px;border-radius:2px;background:#0a70d4"></div>
<!-- vscode -->
<svg class="a" style="left:1237px;top:1044px" width="24" height="24" viewBox="0 0 24 24"><path d="M2.300 15.400 17.600 2.200" stroke="#0a73ba" stroke-width="4.200" stroke-linecap="round"/><path d="M2.300 8.600 17.600 21.800" stroke="#0b84d4" stroke-width="4.200" stroke-linecap="round"/><path d="M17.300 0 23 2.400c.7.300 1.200.9 1.200 1.600v16c0 .7-.5 1.300-1.200 1.600L17.300 24z" fill="#2aabf3"/></svg>
<!-- tray -->
<svg class="a" style="left:1676px;top:1052px" width="12" height="8" viewBox="0 0 12 8"><path d="M1.300 6.500 6 1.800l4.700 4.700" fill="none" stroke="#1b1b1b" stroke-width="1.400" stroke-linecap="round" stroke-linejoin="round"/></svg>
<svg class="a" style="left:1705px;top:1048px" width="18" height="16" viewBox="0 0 18 16"><defs><linearGradient id="cg" x1="0" y1="0" x2="1" y2="1"><stop offset="0" stop-color="#6f6f6f"/><stop offset="1" stop-color="#e2e2e2"/></linearGradient></defs><path d="M4.500 13.500a3.700 3.700 0 0 1-.4-7.400 5 5 0 0 1 9.600 1.200 3.100 3.100 0 0 1-.2 6.200z" fill="url(#cg)" stroke="#2b2b2b" stroke-width="1"/><path d="M1.500 1 16.300 15" stroke="#eeeeee" stroke-width="2.600"/><path d="M1.500 1 16.300 15" stroke="#2b2b2b" stroke-width="1"/></svg>
<div class="a tt ui" style="left:1743px;top:1048px;font-size:12px">ไทย</div>
<svg class="a" style="left:1782px;top:1048px" width="17" height="16" viewBox="0 0 17 16"><path d="M12 1H1.600A1 1 0 0 0 .600 2v8.600a1 1 0 0 0 1 1H12.500" fill="none" stroke="#1b1b1b" stroke-width="1.100"/><path d="M4.500 15.300h6M7.500 11.800v3.400" stroke="#1b1b1b" stroke-width="1.100"/><rect x="12.700" y=".6" width="3.200" height="5" rx=".9" fill="none" stroke="#1b1b1b" stroke-width="1"/><path d="M14.300 5.600v9.700h-2" fill="none" stroke="#1b1b1b" stroke-width="1.100"/><path d="M13.600 2.500h1.500" stroke="#1b1b1b" stroke-width=".8"/></svg>
<svg class="a" style="left:1806px;top:1049px" width="17" height="13" viewBox="0 0 17 13"><path d="M.600 4.300h2.500L6.500.9v11.200L3.100 8.700H.600z" fill="none" stroke="#1b1b1b" stroke-width="1" stroke-linejoin="round"/><path d="M8.800 4.200a3.300 3.300 0 0 1 0 4.600M11 2.500a5.800 5.800 0 0 1 0 8M13.300.8a8.300 8.300 0 0 1 0 11.400" fill="none" stroke="#1b1b1b" stroke-width="1" stroke-linecap="round"/></svg>
<div class="a tt ui" style="right:19px;top:1041px;text-align:right;font-size:11.800px">10:20</div>
<div class="a tt ui" style="right:19px;top:1057px;text-align:right;font-size:11.800px;letter-spacing:.2px">30/12/2568</div>
</body>
</html>
